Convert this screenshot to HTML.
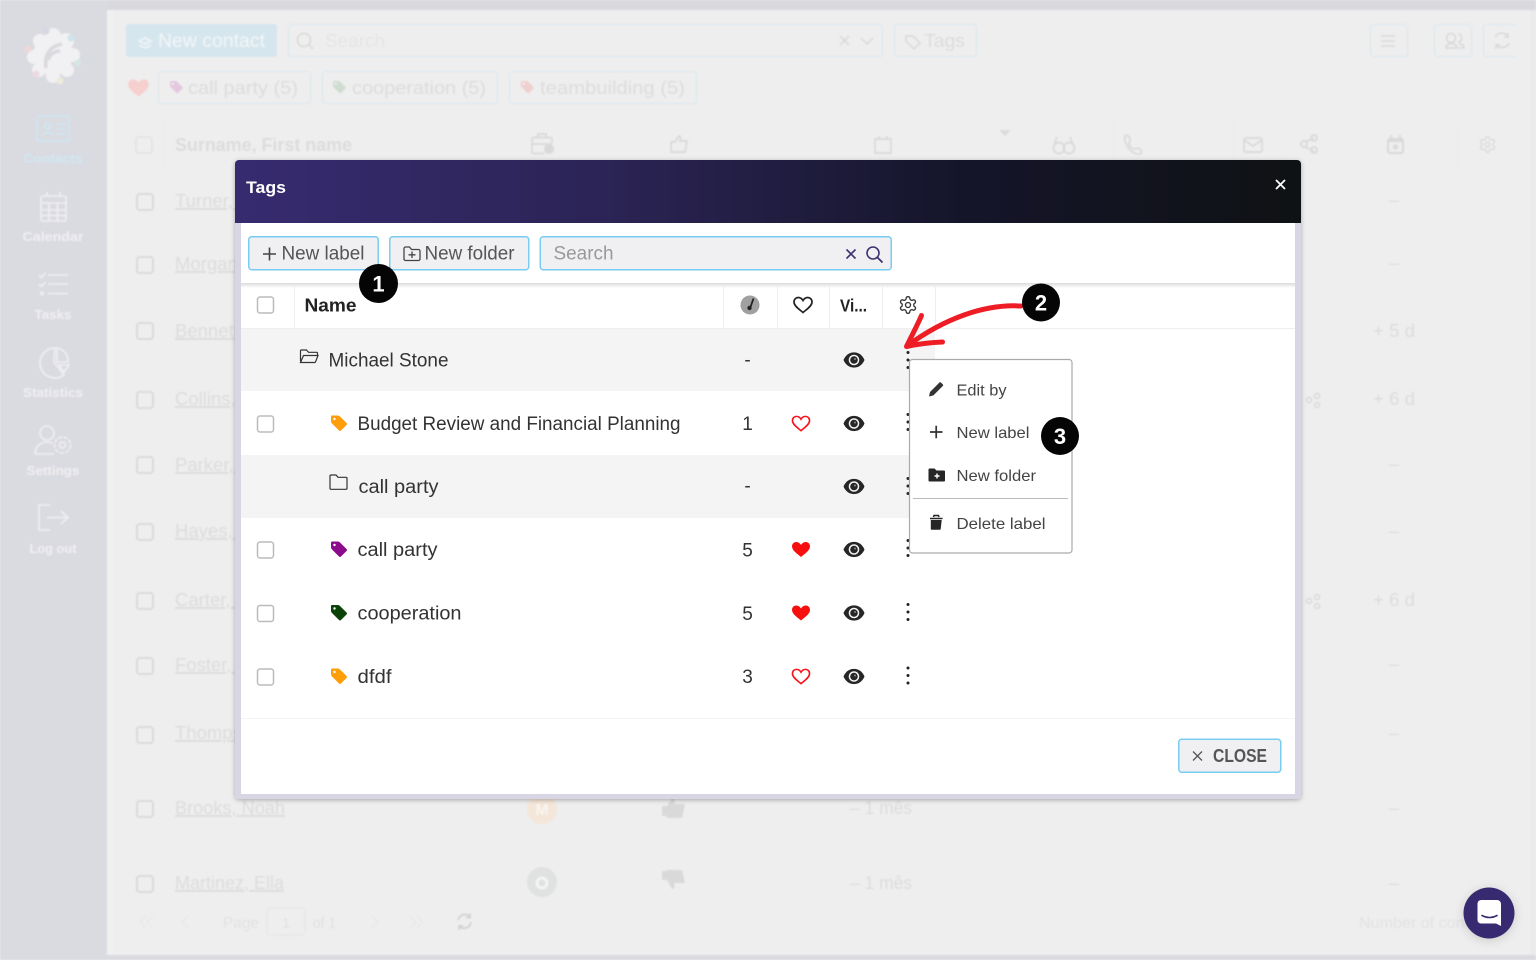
<!DOCTYPE html>
<html><head><meta charset="utf-8"><title>Tags</title>
<style>
html,body{margin:0;padding:0;width:1536px;height:960px;overflow:hidden;background:#eee}
svg{position:absolute;left:0;top:0;display:block}
text{font-family:"Liberation Sans",sans-serif;fill:#333}
#bg{filter:blur(.9px)}
.g{fill:#dcdcdc;font-size:18.5px}
.u{text-decoration:underline}
.s{fill:#f0f0f2;font-size:13px;font-weight:700}
.t{font-size:19px;fill:#333}
.m{font-size:16px;fill:#444}
.b{font-size:19px;fill:#555}
.n{font-size:22px;font-weight:700;fill:#fff}
</style></head><body>
<svg width="0" height="0" style="position:absolute"><defs>
<symbol id="gear" viewBox="0 0 24 24" overflow="visible"><path fill="none" stroke="currentColor" stroke-width="1.600" d="M12.22 2h-.44a2 2 0 0 0-2 2v.18a2 2 0 0 1-1 1.73l-.43.25a2 2 0 0 1-2 0l-.15-.08a2 2 0 0 0-2.73.73l-.22.38a2 2 0 0 0 .73 2.73l.15.1a2 2 0 0 1 1 1.72v.51a2 2 0 0 1-1 1.74l-.15.09a2 2 0 0 0-.73 2.73l.22.38a2 2 0 0 0 2.73.73l.15-.08a2 2 0 0 1 2 0l.43.25a2 2 0 0 1 1 1.73V20a2 2 0 0 0 2 2h.44a2 2 0 0 0 2-2v-.18a2 2 0 0 1 1-1.73l.43-.25a2 2 0 0 1 2 0l.15.08a2 2 0 0 0 2.73-.73l.22-.39a2 2 0 0 0-.73-2.73l-.15-.08a2 2 0 0 1-1-1.74v-.5a2 2 0 0 1 1-1.74l.15-.09a2 2 0 0 0 .73-2.73l-.22-.38a2 2 0 0 0-2.73-.73l-.15.08a2 2 0 0 1-2 0l-.43-.25a2 2 0 0 1-1-1.73V4a2 2 0 0 0-2-2z"/><circle cx="12" cy="12" r="3" fill="none" stroke="currentColor" stroke-width="1.600"/></symbol>
<g id="eye"><path fill="#262626" d="M0-7.6C-5.500-7.600-8.800-4-10.500 0-8.800 4-5.500 7.600 0 7.600S8.800 4 10.500 0C8.800-4 5.500-7.600 0-7.600Z"/><circle r="5.300" fill="#f4f4f4"/><circle r="3.800" fill="#262626"/><circle cx="1" cy="-1" r="1" fill="#888"/></g>
<path id="heart" d="M0 7.500C-3 4.800-9 1.200-9-3-9-6-6.800-7.500-4.800-7.500-2.800-7.500-1-6.200 0-4.500 1-6.200 2.800-7.500 4.800-7.500 6.800-7.500 9-6 9-3 9 1.200 3 4.800 0 7.500Z"/>
<g id="tag"><path d="M1 0H7Q8 0 9 1L15.500 7.500Q16.500 8.500 15.500 9.500L10 15Q9 16 8 15L1 8Q0 7 0 6V1Q0 0 1 0Z"/><circle cx="3.500" cy="3.500" r="1.200" fill="#fff"/></g>
<g id="dots" fill="#222"><circle cy="-7.500" r="1.500"/><circle r="1.500"/><circle cy="7.500" r="1.500"/></g>
<rect id="cb" x="0" y="0" width="16" height="16" rx="2.500" fill="#fff" stroke="#bbb" stroke-width="1.500"/>
<rect id="cbg" x="0" y="0" width="16" height="16" rx="2.500" fill="none" stroke="#d8d8d8" stroke-width="1.800"/>
</defs></svg>

<svg id="bg" width="1536" height="960" viewBox="0 0 1536 960">
<rect width="1536" height="960" fill="#eee"/>
<rect width="1536" height="10" fill="#d9d9dd"/>
<rect y="0" width="107" height="960" fill="#dadae1"/>
<rect y="955" width="1536" height="5" fill="#dadae1"/>
<rect x="1530" y="10" width="6" height="945" fill="#ebebeb"/>
<rect x="107" y="10" width="6" height="945" fill="#f0f0f0"/>

<!-- logo -->
<g fill="#f1f1f3"><circle cx="53" cy="55" r="20"/><circle cx="53" cy="36" r="8"/><circle cx="66" cy="41" r="8"/><circle cx="73" cy="55" r="7"/><circle cx="67" cy="70" r="7"/><circle cx="53" cy="76" r="7"/><circle cx="39" cy="70" r="7"/><circle cx="34" cy="57" r="7"/><circle cx="40" cy="41" r="7"/></g>
<path d="M46 68C44 55 50 46 62 44M48 60C50 54 55 51 60 51" fill="none" stroke="#d9d9de" stroke-width="3.500"/>
<circle cx="46" cy="31" r="3.500" fill="#d9d5e3"/><circle cx="71" cy="38" r="3.500" fill="#cfe3ec"/><circle cx="78" cy="63" r="3.500" fill="#d5e7e3"/><circle cx="60" cy="81" r="3.500" fill="#eeeadc"/><circle cx="36" cy="74" r="3.500" fill="#eed9e0"/><circle cx="28" cy="49" r="3.500" fill="#eed9d9"/>

<!-- sidebar -->
<g fill="none" stroke="#cde8f2" stroke-width="1.600"><rect x="37" y="116" width="32" height="25" rx="2"/><circle cx="47.500" cy="126" r="3"/><path d="M42 136c1-5 10-5 11 0M57 124h9M57 129h9M57 134h9"/></g>
<g fill="none" stroke="#f0f0f2" stroke-width="1.600"><rect x="41" y="196" width="25" height="25" rx="2"/><path d="M41 203h25M41 210h25M41 215.500h25M49 203v18M57.500 203v18M47 192v4M60 192v4"/>
<path d="M39 275l2.500 2.500 4-4.500M39 284l2.500 2.500 4-4.500M48 275h20M48 284h20M48 293.500h20"/><circle cx="42" cy="293.500" r="1.200"/>
<path d="M55 348a15 15 0 1 0 9 27L54 362Z"/><path d="M57 348v14h11a13 13 0 0 0-11-14ZM59 365h10l-5 7Z"/>
<circle cx="47" cy="433" r="7"/><path d="M35 454c0-8 6-12 12-12 2 0 4 .5 6 1.500M35 454h19"/><circle cx="62.500" cy="445" r="3"/><circle cx="62.500" cy="445" r="8" stroke-dasharray="4 1.500"/>
<path d="M50 505H39v25h11M47 517.500h21M61 511l7 6.500-7 6.500"/></g>
<g text-anchor="middle"><text class="s" x="53" y="163" textLength="59" lengthAdjust="spacingAndGlyphs" style="fill:#d0e8f1">Contacts</text>
<text class="s" x="53" y="241" textLength="61" lengthAdjust="spacingAndGlyphs">Calendar</text>
<text class="s" x="53" y="319" textLength="37" lengthAdjust="spacingAndGlyphs">Tasks</text>
<text class="s" x="53" y="397" textLength="60" lengthAdjust="spacingAndGlyphs">Statistics</text>
<text class="s" x="53" y="475" textLength="53" lengthAdjust="spacingAndGlyphs">Settings</text>
<text class="s" x="53" y="553" textLength="47" lengthAdjust="spacingAndGlyphs">Log out</text></g>

<!-- top bar -->
<rect x="126" y="24" width="151" height="33" rx="3" fill="#d6e6ee"/>
<text x="158" y="47" style="font-size:19px;fill:#f2f6f8" textLength="107" lengthAdjust="spacingAndGlyphs">New contact</text>
<path d="M139 41l6-3 6 3-6 3ZM139 45l6 3 6-3" fill="none" stroke="#f2f6f8" stroke-width="1.500"/>
<g fill="none" stroke="#dde9ef" stroke-width="1.300"><rect x="288.500" y="24.500" width="594" height="32" rx="3"/><rect x="894.500" y="24.500" width="82" height="32" rx="3"/><rect x="1370.500" y="24.500" width="37" height="32" rx="3"/><rect x="1434.500" y="24.500" width="37" height="32" rx="3"/><path d="M1516 24.500H1486.500a3 3 0 0 0-3 3V53.500a3 3 0 0 0 3 3H1516"/>
<rect x="158.500" y="71.500" width="152" height="32" rx="3"/><rect x="322.500" y="71.500" width="175" height="32" rx="3"/><rect x="509.500" y="71.500" width="187" height="32" rx="3"/></g>
<g fill="none" stroke="#d8d8d8" stroke-width="1.500"><circle cx="304" cy="40" r="6.500"/><path d="M309 45l4 4M840 36l9 9M849 36l-9 9M861 38l6 6 6-6M1381 36h14M1381 41h14M1381 46h14"/><path d="M906 36h7l7 7-6 6-8-8Z"/><circle cx="1451" cy="38" r="4.500"/><path d="M1446 48c0-6 11-6 11 0ZM1458 34a4 4 0 0 1 0 8M1459 44c3 0 5 1 5 4h-5"/><path d="M1495 37a8 8 0 0 1 13-1M1508 33v4h-4M1509 43a8 8 0 0 1-13 2M1496 49v-4h4"/></g>
<text class="g" x="325" y="47" textLength="60" lengthAdjust="spacingAndGlyphs" style="fill:#e5e5e5">Search</text>
<text class="g" x="924" y="47" textLength="41" lengthAdjust="spacingAndGlyphs">Tags</text>
<use href="#heart" transform="translate(138.500 88) scale(1.150)" fill="#f6cfcf"/>
<use href="#tag" transform="translate(170 81) scale(.8)" fill="#e4c8de"/><use href="#tag" transform="translate(333 81) scale(.8)" fill="#cfdcd0"/><use href="#tag" transform="translate(521 81) scale(.8)" fill="#f0cfcf"/>
<text class="g" x="188" y="94" textLength="110" lengthAdjust="spacingAndGlyphs">call party (5)</text>
<text class="g" x="352" y="94" textLength="134" lengthAdjust="spacingAndGlyphs">cooperation (5)</text>
<text class="g" x="540" y="94" textLength="145" lengthAdjust="spacingAndGlyphs">teambuilding (5)</text>

<!-- table head -->
<path d="M124 122.500H1518M164 122v48M1113 122v48M1233 122v48M1283 122v48M1333 122v48M1458 122v48" stroke="#ebebeb" fill="none"/>
<use href="#cbg" x="136" y="137" opacity=".5"/>
<text x="175" y="151" style="font-size:18.500px;font-weight:700;fill:#dcdcdc" textLength="177" lengthAdjust="spacingAndGlyphs">Surname, First name</text>
<g fill="none" stroke="#d9d9d9" stroke-width="1.700"><path d="M552 143v-4a1.500 1.500 0 0 0-1.500-1.500h-17a1.500 1.500 0 0 0-1.500 1.500v13a1.500 1.500 0 0 0 1.500 1.500h11M538 137v-3h8v3M532 144h20"/><path d="M671 142h4l4-6c2 0 2 3 1 5h7l-2 11h-14ZM875 139h16v14h-16ZM879 136v4M887 136v4M1054 146v-1l3-8M1073 146v-1l-3-8"/><circle cx="1059" cy="148" r="5.500"/><circle cx="1069" cy="148" r="5.500"/><path d="M1125 136c2-2 4 0 5 3s-1 3-1 5 4 5 6 5 3-2 5 0 2 4 0 5c-6 2-17-9-15-18Z"/><rect x="1244" y="138" width="18" height="14" rx="2"/><path d="M1244 140l9 6 9-6M1305 142l9-4M1305 147l9 4"/><circle cx="1304" cy="144" r="3"/><circle cx="1314" cy="138" r="3"/><circle cx="1314" cy="150" r="3"/></g>
<circle cx="549" cy="149" r="5" fill="#d9d9d9"/>
<rect x="1388" y="139" width="15" height="14" rx="2" fill="none" stroke="#d9d9d9" stroke-width="2"/><path d="M1388 141h15M1391 135v4M1400 135v4" stroke="#d9d9d9" stroke-width="2"/><circle cx="1395.500" cy="147" r="2.500" fill="#d9d9d9"/>
<use href="#gear" x="1478" y="135" width="19" height="19" style="color:#d9d9d9"/>
<path d="M999 130h12l-6 6Z" fill="#dcdcdc"/>

<!-- rows -->
<g fill="#eeeeee"><rect x="124" y="232" width="1394" height="64"/><rect x="124" y="366" width="1394" height="66"/><rect x="124" y="500" width="1394" height="66"/><rect x="124" y="632" width="1394" height="68"/></g>
<use href="#cbg" x="137" y="194"/><use href="#cbg" x="137" y="257"/><use href="#cbg" x="137" y="323"/><use href="#cbg" x="137" y="392"/><use href="#cbg" x="137" y="457"/><use href="#cbg" x="137" y="524"/><use href="#cbg" x="137" y="593"/><use href="#cbg" x="137" y="658"/><use href="#cbg" x="137" y="727"/><use href="#cbg" x="137" y="801"/><use href="#cbg" x="137" y="876"/>
<g class="u">
<text class="g u" x="175" y="207">Turner, A</text><text class="g u" x="175" y="270">Morgan, B</text><text class="g u" x="175" y="337">Bennett, C</text><text class="g u" x="175" y="405">Collins, D</text><text class="g u" x="175" y="471">Parker, E</text><text class="g u" x="175" y="537">Hayes, F</text><text class="g u" x="175" y="606">Carter, G</text><text class="g u" x="175" y="671">Foster, H</text><text class="g u" x="175" y="739">Thompson</text>
<text class="g u" x="175" y="814" textLength="110" lengthAdjust="spacingAndGlyphs">Brooks, Noah</text><text class="g u" x="175" y="889" textLength="109" lengthAdjust="spacingAndGlyphs">Martinez, Ella</text></g>
<g text-anchor="middle"><text class="g" x="1394" y="206">–</text><text class="g" x="1394" y="269">–</text><text class="g" x="1394" y="337" textLength="42" lengthAdjust="spacingAndGlyphs">+ 5 d</text><text class="g" x="1394" y="405" textLength="42" lengthAdjust="spacingAndGlyphs">+ 6 d</text><text class="g" x="1394" y="470">–</text><text class="g" x="1394" y="537">–</text><text class="g" x="1394" y="606" textLength="42" lengthAdjust="spacingAndGlyphs">+ 6 d</text><text class="g" x="1394" y="670">–</text><text class="g" x="1394" y="739">–</text><text class="g" x="1394" y="814">–</text><text class="g" x="1394" y="889">–</text></g>
<g fill="none" stroke="#d9d9d9" stroke-width="1.500"><circle cx="1309" cy="400" r="2.500"/><circle cx="1317" cy="396" r="2.500"/><circle cx="1317" cy="405" r="2.500"/><circle cx="1309" cy="601" r="2.500"/><circle cx="1317" cy="597" r="2.500"/><circle cx="1317" cy="606" r="2.500"/></g>
<circle cx="542" cy="809" r="15" fill="#f4e6d8"/><text x="542" y="815" text-anchor="middle" style="font-size:16px;font-weight:700;fill:#f9f5f0">M</text>
<circle cx="542" cy="882" r="15" fill="#dfe2e0"/><circle cx="542" cy="883" r="5" fill="none" stroke="#f4f4f4" stroke-width="3"/>
<rect x="500" y="897" width="90" height="10" fill="#eee"/>
<path d="M662 806h5l5-8c3 0 3 3 2 6h11l-3 14h-15v-2h-5ZM662 880h5l5 9c3 0 3-3 2-6h11l-3-13h-15v1h-5Z" fill="#d9d9d9"/>
<text class="g" x="850" y="814" textLength="62" lengthAdjust="spacingAndGlyphs">– 1 mês</text><text class="g" x="850" y="889" textLength="62" lengthAdjust="spacingAndGlyphs">– 1 mês</text>

<!-- pager -->
<g fill="none" stroke="#e8e8e8" stroke-width="1.500"><path d="M146 916l-6 6 6 6M153 916l-6 6 6 6M188 916l-6 6 6 6M372 916l6 6-6 6M410 916l6 6-6 6M417 916l6 6-6 6"/><rect x="267" y="908" width="38" height="27" rx="3"/></g>
<g fill="none" stroke="#d4d4d4" stroke-width="2"><path d="M458 920a7 7 0 0 1 12-3M470 913.500v4h-4M471 922a7 7 0 0 1-12 4M459 930v-4h4"/></g>
<text x="223" y="928" style="font-size:15.500px;fill:#e1e1e1" textLength="36" lengthAdjust="spacingAndGlyphs">Page</text>
<text x="286" y="928" text-anchor="middle" style="font-size:15px;fill:#e1e1e1">1</text>
<text x="313" y="928" style="font-size:15.500px;fill:#e1e1e1" textLength="23" lengthAdjust="spacingAndGlyphs">of 1</text>
<text x="1359" y="928" style="font-size:15.500px;fill:#e2e2e2" textLength="110" lengthAdjust="spacingAndGlyphs">Number of cont</text>
</svg>

<svg width="1536" height="960" viewBox="0 0 1536 960">
<defs>
<linearGradient id="hd" x1="0" x2="1" y1="0" y2="0"><stop offset="0" stop-color="#372b70"/><stop offset=".35" stop-color="#2b2455"/><stop offset=".68" stop-color="#15152a"/><stop offset="1" stop-color="#0f1214"/></linearGradient>
<filter id="sh" x="-5%" y="-5%" width="110%" height="110%"><feDropShadow dx="0" dy="1" stdDeviation="2.500" flood-color="#000" flood-opacity=".3"/></filter>
<filter id="sh2" x="-30%" y="-30%" width="160%" height="160%"><feDropShadow dx="0" dy="2" stdDeviation="5" flood-color="#000" flood-opacity=".15"/></filter>
<linearGradient id="tb" x1="0" x2="0" y1="0" y2="1"><stop offset="0" stop-color="#dcdcdc"/><stop offset="1" stop-color="#fff"/></linearGradient>
</defs>

<!-- modal -->
<rect x="235" y="160" width="1066" height="639" rx="4" fill="#d8d6e5" filter="url(#sh)"/>
<rect x="241" y="223" width="1054" height="571" fill="#fff"/>
<path d="M235 223V164a4 4 0 0 1 4-4H1297a4 4 0 0 1 4 4V223Z" fill="url(#hd)"/>
<text x="246" y="193" style="font-size:17px;font-weight:700;fill:#fff" textLength="40" lengthAdjust="spacingAndGlyphs">Tags</text>
<path d="M1276 180l9 9M1285 180l-9 9" stroke="#fff" stroke-width="1.800" fill="none"/>

<!-- toolbar -->
<g fill="#f0f0f3" stroke="#79cdf2" stroke-width="1.500"><rect x="248.750" y="236.750" width="129.500" height="33" rx="3"/><rect x="389.750" y="236.750" width="139" height="33" rx="3"/><rect x="540.250" y="236.750" width="351" height="33" rx="3"/></g>
<path d="M263 254h13M269.500 247.500v13" stroke="#444" stroke-width="1.600" fill="none"/>
<text class="b" x="281.500" y="259.500" textLength="83" lengthAdjust="spacingAndGlyphs">New label</text>
<path d="M404 248.500a1.500 1.500 0 0 1 1.500-1.500h4l2 2.500h7a1.500 1.500 0 0 1 1.500 1.500v8a1.500 1.500 0 0 1-1.500 1.500h-13a1.500 1.500 0 0 1-1.500-1.500ZM412 251.500v6.500M408.500 254.800h7" stroke="#444" stroke-width="1.300" fill="none"/>
<text class="b" x="424.500" y="259.500" textLength="90" lengthAdjust="spacingAndGlyphs">New folder</text>
<text x="553.500" y="259.500" style="font-size:19px;fill:#999" textLength="60" lengthAdjust="spacingAndGlyphs">Search</text>
<path d="M846.500 249.500l9 9M855.500 249.500l-9 9" stroke="#3b3270" stroke-width="1.600" fill="none"/>
<circle cx="873" cy="253" r="6" fill="none" stroke="#3b3270" stroke-width="1.600"/><path d="M877.500 257.500l5 5" stroke="#3b3270" stroke-width="1.800"/>

<!-- table header -->
<rect x="241" y="283" width="1054" height="5" fill="url(#tb)"/>
<path d="M241 328.500H1295" stroke="#eee"/>
<path d="M294.500 285v43M723.500 285v43M777.500 285v43M829.500 285v43M882.500 285v43M935.500 285v43" stroke="#eee" fill="none"/>
<use href="#cb" x="257.500" y="297"/>
<text x="304.500" y="311.500" style="font-size:18.500px;font-weight:700;fill:#222" textLength="52" lengthAdjust="spacingAndGlyphs">Name</text>
<circle cx="750" cy="305" r="9.500" fill="#a0a0a0"/><path d="M753.500 298.500l-3 8.500" stroke="#222" stroke-width="1.800"/><circle cx="749.500" cy="308" r="2.200" fill="#222"/>
<use href="#heart" transform="translate(803 305)" fill="#fff" stroke="#222" stroke-width="1.700"/>
<text x="840" y="311.500" style="font-size:17.500px;font-weight:700;fill:#222" textLength="27" lengthAdjust="spacingAndGlyphs">Vi...</text>
<use href="#gear" x="898" y="295" width="20" height="20" style="color:#333"/>

<!-- rows -->
<rect x="241" y="329" width="694" height="62" fill="#f4f4f4"/>
<rect x="241" y="455" width="694" height="63" fill="#f4f4f4"/>
<path d="M241 718.500H1295" stroke="#f4f4f4"/>

<path d="M300.500 361.500V351a1 1 0 0 1 1-1h5l2 2.300h8a1 1 0 0 1 1 1v2M300.500 362.500l3-7h14.500l-2.500 6.500a1 1 0 0 1-1 .5Z" fill="none" stroke="#333" stroke-width="1.200"/>
<text class="t" x="328.500" y="366.500" textLength="120" lengthAdjust="spacingAndGlyphs">Michael Stone</text>
<use href="#tag" x="331" y="415.500" fill="#ff9d0b"/>
<use href="#cb" x="257.500" y="416"/>
<text class="t" x="357.500" y="430" textLength="323" lengthAdjust="spacingAndGlyphs">Budget Review and Financial Planning</text>
<path d="M330 476a1 1 0 0 1 1-1h5l2 2.300h8a1 1 0 0 1 1 1v10a1 1 0 0 1-1 1h-15a1 1 0 0 1-1-1Z" fill="none" stroke="#333" stroke-width="1.200"/>
<text class="t" x="358.500" y="493" textLength="80" lengthAdjust="spacingAndGlyphs">call party</text>
<use href="#cb" x="257.500" y="542"/><use href="#tag" x="331" y="541.500" fill="#8b0a8b"/>
<text class="t" x="357.500" y="556" textLength="80" lengthAdjust="spacingAndGlyphs">call party</text>
<use href="#cb" x="257.500" y="605.500"/><use href="#tag" x="331" y="605" fill="#0b4208"/>
<text class="t" x="357.500" y="619.500" textLength="104" lengthAdjust="spacingAndGlyphs">cooperation</text>
<use href="#cb" x="257.500" y="669"/><use href="#tag" x="331" y="668.500" fill="#ff9d0b"/>
<text class="t" x="357.500" y="683" textLength="34" lengthAdjust="spacingAndGlyphs">dfdf</text>

<g text-anchor="middle"><text class="t" x="747.500" y="366">-</text><text class="t" x="747.500" y="430">1</text><text class="t" x="747.500" y="492">-</text><text class="t" x="747.500" y="556.500">5</text><text class="t" x="747.500" y="620">5</text><text class="t" x="747.500" y="683">3</text></g>
<use href="#heart" transform="translate(801 423.500) scale(.95)" fill="none" stroke="#f5141c" stroke-width="1.700"/>
<use href="#heart" transform="translate(801 549.500)" fill="#f70f0f"/>
<use href="#heart" transform="translate(801 613)" fill="#f70f0f"/>
<use href="#heart" transform="translate(801 676.500) scale(.95)" fill="none" stroke="#f5141c" stroke-width="1.700"/>
<use href="#eye" x="854" y="360"/><use href="#eye" x="854" y="423.500"/><use href="#eye" x="854" y="486.500"/><use href="#eye" x="854" y="549.500"/><use href="#eye" x="854" y="613"/><use href="#eye" x="854" y="676.500"/>
<use href="#dots" x="908" y="360"/><use href="#dots" x="908" y="422"/><use href="#dots" x="908" y="486"/><use href="#dots" x="908" y="548"/><use href="#dots" x="908" y="612"/><use href="#dots" x="908" y="675.500"/>

<!-- close -->
<rect x="1178.750" y="739.250" width="102" height="33" rx="3" fill="#f0f0f3" stroke="#79cdf2" stroke-width="1.500"/>
<path d="M1193 751.500l9 9M1202 751.500l-9 9" stroke="#555" stroke-width="1.300" fill="none"/>
<text x="1213" y="762" style="font-size:18.500px;font-weight:700;fill:#555" textLength="54" lengthAdjust="spacingAndGlyphs">CLOSE</text>

<!-- menu -->
<rect x="909.500" y="359.500" width="162.500" height="193.500" rx="3" fill="#fff" stroke="#aaa" stroke-width="1.200"/>
<path d="M929 396.500l1-4.500 9.500-9.500a1 1 0 0 1 1.400 0l2 2a1 1 0 0 1 0 1.400l-9.500 9.500Z" fill="#333"/>
<text class="m" x="956.500" y="395.500" textLength="50" lengthAdjust="spacingAndGlyphs">Edit by</text>
<path d="M930 432h12.500M936.200 425.800v12.500" stroke="#333" stroke-width="1.700" fill="none"/>
<text class="m" x="956.500" y="438" textLength="73" lengthAdjust="spacingAndGlyphs">New label</text>
<path d="M928.500 469.500a1 1 0 0 1 1-1h5l2 2h7.500a1 1 0 0 1 1 1v9a1 1 0 0 1-1 1h-14.500a1 1 0 0 1-1-1Z" fill="#262626"/><path d="M937 473.500v5M934.500 476h5" stroke="#fff" stroke-width="1.400"/>
<text class="m" x="956.500" y="481" textLength="79.500" lengthAdjust="spacingAndGlyphs">New folder</text>
<path d="M913 498.500H1068" stroke="#bbb"/>
<path d="M930 518.500h12.500M933.500 517l.5-1.500h4.500l.5 1.500" stroke="#262626" stroke-width="1.500" fill="none"/><path d="M930.800 520h10.900l-1 9a1 1 0 0 1-1 .8h-7.900a1 1 0 0 1-1-.8Z" fill="#262626"/>
<text class="m" x="956.500" y="529" textLength="89" lengthAdjust="spacingAndGlyphs">Delete label</text>

<!-- arrow -->
<g fill="none" stroke="#ee1c25" stroke-linecap="round" stroke-linejoin="round"><path d="M1021 306C985 304 945 318 907 346" stroke-width="5"/><path d="M921.500 315.500C917 326 911 337 906.500 346.500C918 344 930 342.500 942.500 342" stroke-width="5"/></g>

<!-- badges -->
<circle cx="378.500" cy="283.500" r="19.500" fill="#050505"/><text class="n" x="378.500" y="291.500" text-anchor="middle">1</text>
<circle cx="1041" cy="302.500" r="19" fill="#050505"/><text class="n" x="1041" y="310.500" text-anchor="middle">2</text>
<circle cx="1060" cy="436" r="19" fill="#050505"/><text class="n" x="1060" y="444" text-anchor="middle">3</text>

<!-- chat -->
<circle cx="1489" cy="913" r="25.500" fill="#372b70" filter="url(#sh2)"/>
<path d="M1481 900h16a4 4 0 0 1 4 4v22l-5-2.500h-15a3.500 3.500 0 0 1-3.500-3.500v-16.500a4 4 0 0 1 3.500-3.500Z" fill="#fff"/>
<path d="M1482 915.500q7.500 4 15 0" fill="none" stroke="#372b70" stroke-width="1.600" stroke-linecap="round"/>
</svg>
</body></html>
